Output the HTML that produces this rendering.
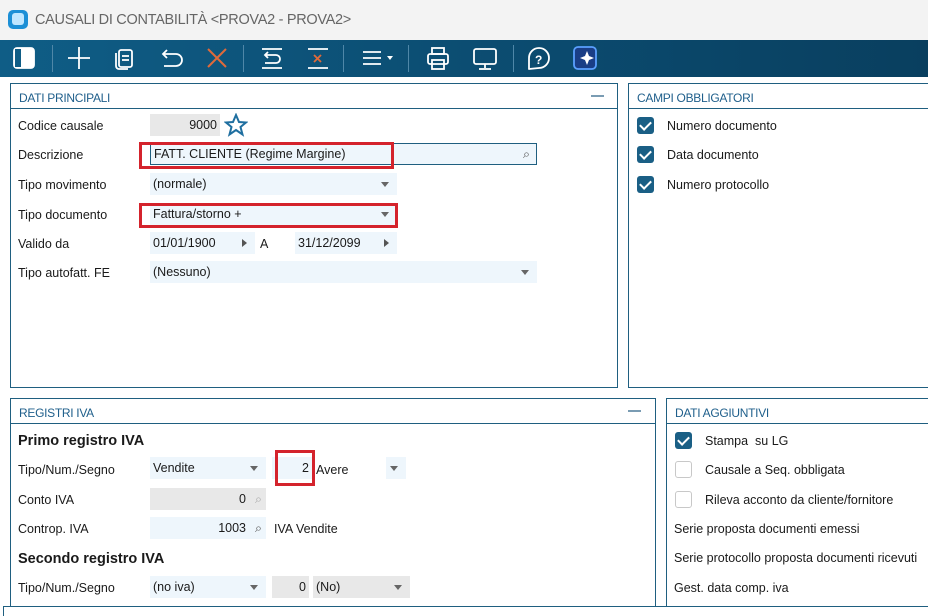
<!DOCTYPE html>
<html><head><meta charset="utf-8"><style>
*{box-sizing:border-box;margin:0;padding:0}
body{width:928px;height:613px;overflow:hidden;background:#fff;font-family:"Liberation Sans",sans-serif;font-size:12.5px;color:#1a1a1a;position:relative}
.a{position:absolute}
.title{left:0;top:0;width:928px;height:40px;background:#f3f3f3}
.tb{left:0;top:40px;width:928px;height:37px;background:linear-gradient(90deg,#0f5d86,#0b4a6e 60%,#093f5f)}
.sep{position:absolute;top:5px;width:1px;height:27px;background:#4f87a8}
.panel{position:absolute;border:1px solid #1f5f80;background:#fff}
.ph{height:25px;border-bottom:1px solid #1f5f80;color:#1f5f8b;font-size:12px;padding:7px 0 0 8px;letter-spacing:-0.3px}
.min{position:absolute;top:11px;width:13px;height:2px;background:#7a9cb3}
.f{position:absolute;background:#eef6fc;height:22px;padding:4px 3px;white-space:nowrap}
.g{background:#e8e8e8}
.dd::after{content:"";position:absolute;right:8px;top:9px;border:4px solid transparent;border-top:5px solid #666;border-bottom:none}
.ar::after{content:"";position:absolute;right:8px;top:7px;border:4px solid transparent;border-left:5px solid #555;border-right:none}
.red{position:absolute;border:3px solid #d4232c}
.cb{position:absolute;width:17px;height:17px;border-radius:3px;background:#1a5f85}
.cb::after{content:"";position:absolute;left:5px;top:2px;width:5px;height:9px;border:solid #fff;border-width:0 2px 2px 0;transform:rotate(45deg)}
.cbe{position:absolute;width:17px;height:17px;border-radius:3px;border:1px solid #c8c8c8;background:#fff}
.b{font-weight:bold;font-size:14.5px}
</style></head><body>
<div class="a title"></div>
<div class="a" style="left:8px;top:10px;width:20px;height:19px;border-radius:5px;background:#1c8fd6"></div>
<div class="a" style="left:12px;top:13px;width:12px;height:12px;border-radius:3px;background:#bfe6ff"></div>
<div class="a" style="left:35px;top:12px;font-size:14.5px;color:#666;letter-spacing:-0.3px">CAUSALI DI CONTABILITÀ &lt;PROVA2 - PROVA2&gt;</div>
<div class="a tb">
<svg width="928" height="37" style="position:absolute;left:0;top:0" fill="none" stroke="#fff" stroke-width="1.8">
<rect x="14" y="8" width="20" height="20" rx="3" fill="#fff"/><rect x="15" y="9" width="6" height="18" fill="#0f5d86" stroke="none"/>
<line x1="68" y1="18" x2="90" y2="18"/><line x1="79" y1="7" x2="79" y2="29"/>
<rect x="119" y="10" width="13" height="17" rx="2"/><path d="M116 13v13a3 3 0 0 0 3 3h9"/><line x1="122" y1="16" x2="129" y2="16"/><line x1="122" y1="20" x2="129" y2="20"/>
<path d="M163 14h13a6 6 0 0 1 0 12h-12M167 10l-4 4 4 4"/>
<path d="M208 9l18 18M226 9l-18 18" stroke="#e06a3a" stroke-width="2"/>
<line x1="262" y1="9" x2="282" y2="9"/><line x1="262" y1="28" x2="282" y2="28"/><path d="M265 15h11a4 4 0 0 1 0 8h-11M268 12l-3 3 3 3"/>
<line x1="308" y1="9" x2="328" y2="9"/><line x1="308" y1="28" x2="328" y2="28"/><path d="M314 15l7 7M321 15l-7 7" stroke="#e06a3a"/>
<line x1="363" y1="12" x2="381" y2="12"/><line x1="363" y1="18" x2="381" y2="18"/><line x1="363" y1="24" x2="381" y2="24"/><path d="M387 16h6l-3 4z" fill="#fff" stroke="none"/>
<rect x="428" y="14" width="20" height="10" rx="2"/><rect x="432" y="8" width="12" height="6"/><rect x="432" y="20" width="12" height="9"/>
<rect x="474" y="9" width="22" height="15" rx="2"/><line x1="485" y1="24" x2="485" y2="28"/><line x1="479" y1="29" x2="491" y2="29"/>
<path d="M529 29v-11a10 10 0 1 1 10 10z" stroke-linejoin="round"/>
<text x="535" y="24" fill="#fff" stroke="none" font-size="12" font-weight="bold" font-family="Liberation Sans">?</text>
<rect x="574" y="7" width="22" height="22" rx="4" fill="#1a3e86" stroke="#5aa0ff"/><path d="M587 11l2 5 5 2-5 2-2 5-2-5-5-2 5-2z" fill="#fff" stroke="none"/>
</svg>
<div class="sep" style="left:52px"></div><div class="sep" style="left:243px"></div><div class="sep" style="left:343px"></div><div class="sep" style="left:408px"></div><div class="sep" style="left:513px"></div>
</div>

<div class="panel" style="left:10px;top:83px;width:608px;height:305px"><div class="ph">DATI PRINCIPALI</div><div class="min" style="left:580px"></div></div>
<div class="panel" style="left:628px;top:83px;width:310px;height:305px"><div class="ph">CAMPI OBBLIGATORI</div></div>
<div class="panel" style="left:10px;top:398px;width:646px;height:212px"><div class="ph">REGISTRI IVA</div><div class="min" style="left:617px"></div></div>
<div class="panel" style="left:666px;top:398px;width:272px;height:212px"><div class="ph">DATI AGGIUNTIVI</div></div>
<div class="a" style="left:3px;top:606px;width:925px;height:10px;background:#fff;border-top:1px solid #1f5f80;border-left:1px solid #1f5f80"></div>

<div class="a" style="left:18px;top:119px">Codice causale</div>
<div class="f g" style="left:150px;top:114px;width:70px;text-align:right">9000</div>
<svg class="a" style="left:224px;top:113px" width="24" height="24"><path d="M12 2l3 7 7 .5-5.5 4.5 2 7.5L12 17l-6.5 4.5 2-7.5L2 9.5 9 9z" fill="none" stroke="#1f6fa0" stroke-width="2"/></svg>
<div class="a" style="left:18px;top:148px">Descrizione</div>
<div class="f" style="left:150px;top:143px;width:387px;border:1px solid #1f5f80;padding-top:3px">FATT. CLIENTE (Regime Margine)<span style="position:absolute;right:6px;top:3px;color:#555">⌕</span></div>
<div class="red" style="left:139px;top:142px;width:255px;height:27px"></div>
<div class="a" style="left:18px;top:178px">Tipo movimento</div>
<div class="f dd" style="left:150px;top:173px;width:247px">(normale)</div>
<div class="a" style="left:18px;top:208px">Tipo documento</div>
<div class="f dd" style="left:150px;top:203px;width:247px">Fattura/storno +</div>
<div class="red" style="left:139px;top:203px;width:259px;height:25px"></div>
<div class="a" style="left:18px;top:237px">Valido da</div>
<div class="f ar" style="left:150px;top:232px;width:105px">01/01/1900</div>
<div class="a" style="left:260px;top:237px">A</div>
<div class="f ar" style="left:295px;top:232px;width:102px">31/12/2099</div>
<div class="a" style="left:18px;top:266px">Tipo autofatt. FE</div>
<div class="f dd" style="left:150px;top:261px;width:387px">(Nessuno)</div>

<div class="cb" style="left:637px;top:117px"></div><div class="a" style="left:667px;top:119px">Numero documento</div>
<div class="cb" style="left:637px;top:146px"></div><div class="a" style="left:667px;top:148px">Data documento</div>
<div class="cb" style="left:637px;top:176px"></div><div class="a" style="left:667px;top:178px">Numero protocollo</div>

<div class="a b" style="left:18px;top:433px">Primo registro IVA</div>
<div class="a" style="left:18px;top:463px">Tipo/Num./Segno</div>
<div class="f dd" style="left:150px;top:457px;width:116px">Vendite</div>
<div class="f" style="left:272px;top:457px;width:40px;text-align:right">2</div>
<div class="red" style="left:275px;top:450px;width:40px;height:36px"></div>
<div class="a" style="left:316px;top:463px">Avere</div>
<div class="f dd" style="left:386px;top:457px;width:20px"></div>
<div class="a" style="left:18px;top:493px">Conto IVA</div>
<div class="f g" style="left:150px;top:488px;width:116px;text-align:right;padding-right:20px">0<span style="position:absolute;right:4px;color:#aaa">⌕</span></div>
<div class="a" style="left:18px;top:522px">Controp. IVA</div>
<div class="f" style="left:150px;top:517px;width:116px;text-align:right;padding-right:20px">1003<span style="position:absolute;right:4px;color:#555">⌕</span></div>
<div class="a" style="left:274px;top:522px">IVA Vendite</div>
<div class="a b" style="left:18px;top:551px">Secondo registro IVA</div>
<div class="a" style="left:18px;top:581px">Tipo/Num./Segno</div>
<div class="f dd" style="left:150px;top:576px;width:116px">(no iva)</div>
<div class="f g" style="left:272px;top:576px;width:37px;text-align:right">0</div>
<div class="f g dd" style="left:313px;top:576px;width:97px">(No)</div>

<div class="cb" style="left:675px;top:432px"></div><div class="a" style="left:705px;top:434px">Stampa&nbsp; su LG</div>
<div class="cbe" style="left:675px;top:461px"></div><div class="a" style="left:705px;top:463px">Causale a Seq. obbligata</div>
<div class="cbe" style="left:675px;top:491px"></div><div class="a" style="left:705px;top:493px">Rileva acconto da cliente/fornitore</div>
<div class="a" style="left:674px;top:522px">Serie proposta documenti emessi</div>
<div class="a" style="left:674px;top:551px;white-space:nowrap">Serie protocollo proposta documenti ricevuti</div>
<div class="a" style="left:674px;top:581px">Gest. data comp. iva</div>
</body></html>
